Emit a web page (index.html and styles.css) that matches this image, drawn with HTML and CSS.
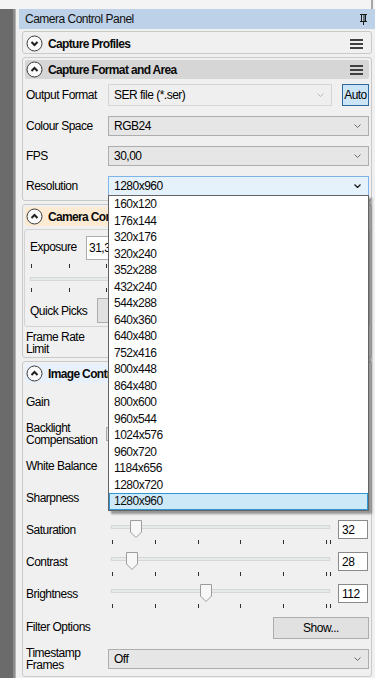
FILE: index.html
```html
<!DOCTYPE html>
<html>
<head>
<meta charset="utf-8">
<title>Camera Control Panel</title>
<link rel="stylesheet" href="styles.css">
</head>
<body>
<div class="topstrip"><div class="topstrip-fill"></div><div class="topstrip-line"></div></div>
<div class="main">
  <div class="dock-dark"></div>
  <div class="dock-edge"></div>
  <div class="dock-gap"></div>
  <div class="panel">
    <div class="titlebar">
      <span class="title">Camera Control Panel</span>
      <svg class="pin" width="7" height="11" viewBox="0 0 7 11"><path d="M0 0.5H7" stroke="#1a1a1a"/><path d="M1.5 0.5V7M5.5 0.5V7" stroke="#1a1a1a"/><path d="M4 1V7" stroke="#1a1a1a"/><path d="M0 7.5H7" stroke="#1a1a1a"/><path d="M3.5 7.5V11" stroke="#1a1a1a"/></svg>
    </div>
    <div class="sections">
      <section class="box">
        <div class="hdr">
          <svg class="ico" width="17" height="17" viewBox="0 0 17 17"><circle cx="8.5" cy="8.5" r="7.5" fill="#fafafa" stroke="#3a3a3a"/><path d="M5.5 7L8.5 10L11.5 7" fill="none" stroke="#1e1e1e" stroke-width="2"/></svg>
          <span class="htxt">Capture Profiles</span>
          <svg class="menu" width="13" height="10" viewBox="0 0 13 10"><rect x="0" y="0" width="13" height="2" fill="#404040"/><rect x="0" y="4" width="13" height="2" fill="#404040"/><rect x="0" y="8" width="13" height="2" fill="#404040"/></svg>
        </div>
      </section>

      <section class="box">
        <div class="hdr hdr-gray">
          <svg class="ico" width="17" height="17" viewBox="0 0 17 17"><circle cx="8.5" cy="8.5" r="7.5" fill="#fafafa" stroke="#3a3a3a"/><path d="M5.5 10L8.5 7L11.5 10" fill="none" stroke="#1e1e1e" stroke-width="2"/></svg>
          <span class="htxt">Capture Format and Area</span>
          <svg class="menu" width="13" height="10" viewBox="0 0 13 10"><rect x="0" y="0" width="13" height="2" fill="#404040"/><rect x="0" y="4" width="13" height="2" fill="#404040"/><rect x="0" y="8" width="13" height="2" fill="#404040"/></svg>
        </div>
        <div class="fmt-rows">
          <div class="frow frow-first">
            <span class="lbl">Output Format</span>
            <div class="combo combo-disabled combo-short"><span>SER file (*.ser)</span><svg class="chev" width="7" height="4" viewBox="0 0 7 4"><path d="M0.5 0.5L3.5 3.5L6.5 0.5" fill="none" stroke="#b8b8b8"/></svg></div>
            <div class="auto">Auto</div>
          </div>
          <div class="frow">
            <span class="lbl">Colour Space</span>
            <div class="combo"><span>RGB24</span><svg class="chev" width="7" height="4" viewBox="0 0 7 4"><path d="M0.5 0.5L3.5 3.5L6.5 0.5" fill="none" stroke="#6a6a6a"/></svg></div>
          </div>
          <div class="frow">
            <span class="lbl">FPS</span>
            <div class="combo"><span>30,00</span><svg class="chev" width="7" height="4" viewBox="0 0 7 4"><path d="M0.5 0.5L3.5 3.5L6.5 0.5" fill="none" stroke="#6a6a6a"/></svg></div>
          </div>
          <div class="frow">
            <span class="lbl">Resolution</span>
            <div class="combo-host">
              <div class="combo combo-active"><span>1280x960</span><svg class="chev" width="7" height="4" viewBox="0 0 7 4"><path d="M0.5 0.5L3.5 3.5L6.5 0.5" fill="none" stroke="#1a1a1a" stroke-width="1.3"/></svg></div>
              <ul class="droplist">
                <li>160x120</li>
                <li>176x144</li>
                <li>320x176</li>
                <li>320x240</li>
                <li>352x288</li>
                <li>432x240</li>
                <li>544x288</li>
                <li>640x360</li>
                <li>640x480</li>
                <li>752x416</li>
                <li>800x448</li>
                <li>864x480</li>
                <li>800x600</li>
                <li>960x544</li>
                <li>1024x576</li>
                <li>960x720</li>
                <li>1184x656</li>
                <li>1280x720</li>
                <li class="sel">1280x960</li>
              </ul>
            </div>
          </div>
        </div>
      </section>

      <section class="box">
        <div class="hdr hdr-peach">
          <svg class="ico" width="17" height="17" viewBox="0 0 17 17"><circle cx="8.5" cy="8.5" r="7.5" fill="#fafafa" stroke="#3a3a3a"/><path d="M5.5 10L8.5 7L11.5 10" fill="none" stroke="#1e1e1e" stroke-width="2"/></svg>
          <span class="htxt htxt-clip">Camera Control</span>
        </div>
        <div class="group">
          <div class="exp-row">
            <span class="exp-lbl">Exposure</span>
            <div class="textbox"><span class="tb-clip">31,3333</span></div>
          </div>
          <div class="gticks"><i></i><i></i><i></i><i></i><i></i><i></i><i></i></div>
          <div class="gtrack"></div>
          <div class="gticks gticks2"><i></i><i></i><i></i><i></i><i></i><i></i><i></i></div>
          <div class="qp-row">
            <span class="qp-lbl">Quick Picks</span>
            <div class="qp-btn"></div>
          </div>
        </div>
        <div class="fr-row"><span class="lbl lbl2">Frame Rate<br>Limit</span></div>
      </section>

      <section class="box box-img">
        <div class="hdr hdr-blue">
          <svg class="ico" width="17" height="17" viewBox="0 0 17 17"><circle cx="8.5" cy="8.5" r="7.5" fill="#fafafa" stroke="#3a3a3a"/><path d="M5.5 10L8.5 7L11.5 10" fill="none" stroke="#1e1e1e" stroke-width="2"/></svg>
          <span class="htxt htxt-clip">Image Controls</span>
        </div>
        <div class="img-rows">
          <div class="irow"><span class="lbl">Gain</span></div>
          <div class="irow"><span class="lbl lbl2">Backlight<br>Compensation</span><div class="mini"></div></div>
          <div class="irow"><span class="lbl">White Balance</span></div>
          <div class="irow"><span class="lbl">Sharpness</span></div>
          <div class="irow irow-slider">
            <span class="lbl">Saturation</span>
            <div class="slider">
              <div class="track"></div>
              <svg class="thumb" style="left:22px" width="12" height="18" viewBox="0 0 12 18"><path d="M0.5 0.5H11.5V12L6 17.5L0.5 12Z" fill="#f7f7f7" stroke="#9c9c9c"/></svg>
              <div class="ticks"><i></i><i></i><i></i><i></i><i></i><i></i><i class="last"></i></div>
            </div>
            <div class="valbox">32</div>
          </div>
          <div class="irow irow-slider">
            <span class="lbl">Contrast</span>
            <div class="slider">
              <div class="track"></div>
              <svg class="thumb" style="left:18px" width="12" height="18" viewBox="0 0 12 18"><path d="M0.5 0.5H11.5V12L6 17.5L0.5 12Z" fill="#f7f7f7" stroke="#9c9c9c"/></svg>
              <div class="ticks"><i></i><i></i><i></i><i></i><i></i><i></i><i class="last"></i></div>
            </div>
            <div class="valbox">28</div>
          </div>
          <div class="irow irow-slider">
            <span class="lbl">Brightness</span>
            <div class="slider">
              <div class="track"></div>
              <svg class="thumb" style="left:92px" width="12" height="18" viewBox="0 0 12 18"><path d="M0.5 0.5H11.5V12L6 17.5L0.5 12Z" fill="#f7f7f7" stroke="#9c9c9c"/></svg>
              <div class="ticks"><i></i><i></i><i></i><i></i><i></i><i></i><i class="last"></i></div>
            </div>
            <div class="valbox">112</div>
          </div>
          <div class="irow irow-btn">
            <span class="lbl">Filter Options</span>
            <div class="show-btn">Show...</div>
          </div>
          <div class="irow">
            <span class="lbl lbl2">Timestamp<br>Frames</span>
            <div class="combo"><span>Off</span><svg class="chev" width="7" height="4" viewBox="0 0 7 4"><path d="M0.5 0.5L3.5 3.5L6.5 0.5" fill="none" stroke="#6a6a6a"/></svg></div>
          </div>
        </div>
      </section>
      <section class="box box-next"></section>
    </div>
  </div>
</div>
</body>
</html>
```

FILE: styles.css
```css
* { box-sizing: border-box; margin: 0; padding: 0; }
html, body { width: 375px; height: 678px; overflow: hidden; }
body {
  background: #f0f0f0;
  font-family: "Liberation Sans", Arial, sans-serif;
  font-size: 12px;
  letter-spacing: -0.5px;
  color: #000;
}
ul { list-style: none; }

.topstrip { height: 9px; background: #f4f4f4; display: flex; }
.topstrip-fill { width: 371px; }
.topstrip-line { width: 2px; background: #a8a8a8; }

.main { display: flex; height: 669px; overflow: hidden; }
.dock-dark { width: 13px; background: #6b6b6b; flex: none; }
.dock-edge { width: 3px; background: #8c8c8c; border-right: 1px solid #b4b4b4; flex: none; }
.dock-gap { width: 3px; flex: none; }
.panel { flex: 1; display: flex; flex-direction: column; min-width: 0; }

.titlebar {
  flex: none;
  height: 20px;
  background: #bdd1e9;
  display: flex;
  align-items: center;
  justify-content: space-between;
  padding: 0 8px 0 6px;
}
.title { font-size: 12px; color: #111; }
.pin { display: block; }

.sections { flex: none; padding: 2px 3px 0 3px; display: flex; flex-direction: column; gap: 3px; }

.box {
  flex: none;
  border: 1px solid #c9c9c9;
  border-radius: 3px;
  padding: 2px 2px 0 2px;
  background: #f0f0f0;
}
.box-img { padding-bottom: 1px; }
.box-next { height: 20px; }

.hdr {
  height: 19px;
  display: flex;
  align-items: center;
  padding: 0 6px 0 1px;
  border-radius: 2px;
}
.hdr-gray { background: #d6d6d6; }
.hdr-peach { background: #fcead3; }
.hdr-blue { background: #e8f1fb; }
.ico { flex: none; display: block; }
.htxt { flex: 1; margin-left: 5px; font-weight: bold; letter-spacing: -0.65px; color: #0a0a0a; white-space: nowrap; }
.htxt-clip { flex: none; width: 60px; overflow: hidden; }
.menu { flex: none; display: block; }

.lbl { flex: 0 0 83px; padding-left: 1px; white-space: nowrap; }
.lbl2 { line-height: 12px; }

/* Capture format rows */
.fmt-rows { padding: 5px 0 4px 0; display: flex; flex-direction: column; gap: 10px; }
.frow { display: flex; align-items: center; height: 20px; }
.frow-first { height: 22px; }

.combo {
  flex: 1;
  height: 20px;
  display: flex;
  align-items: center;
  justify-content: space-between;
  padding: 0 7px 0 5px;
  border: 1px solid #adadad;
  background: #e6e6e6;
  white-space: nowrap;
}
.combo span { padding-bottom: 1px; }
.combo-short { flex: 0 0 224px; height: 22px; }
.combo-disabled { background: #efefef; border-color: #d6d6d6; }
.combo-active { background: #e5f1fb; border-color: #7eb4ea; }
.chev { display: block; flex: none; }

.auto {
  flex: 0 0 27px;
  height: 22px;
  margin-left: 10px;
  background: #cce4f7;
  border: 1px solid #2c6a9e;
  display: flex;
  align-items: center;
  justify-content: center;
  letter-spacing: -0.6px;
}

.combo-host { flex: 1; position: relative; height: 20px; display: flex; }
.droplist {
  position: absolute;
  left: 0;
  right: 0;
  top: calc(100% - 1px);
  z-index: 10;
  background: #fff;
  border: 1px solid #646464;
  box-shadow: 3px 3px 2px rgba(0, 0, 0, 0.38);
}
.droplist li {
  height: 16.5px;
  line-height: 17px;
  padding-left: 5px;
  color: #0c0c0c;
}
.droplist li.sel {
  background: #cde8f7;
  border: 1px solid #2f97d4;
  padding-left: 4px;
  line-height: 14px;
}

/* Camera control group */
.group {
  margin: 3px -1px 0 -1px;
  border: 1px solid #d3d3d3;
  border-radius: 3px;
  padding: 0 0 3px 5px;
}
.exp-row { margin-top: 6px; height: 24px; display: flex; align-items: center; }
.exp-lbl { flex: 0 0 56px; padding-bottom: 3px; }
.textbox {
  width: 80px;
  height: 24px;
  border: 1px solid #abadb3;
  background: #fff;
  padding-left: 2px;
  display: flex;
  align-items: center;
}
.tb-clip { display: block; width: 19px; overflow: hidden; white-space: nowrap; }
.gticks { margin-top: 4px; height: 4px; display: flex; padding-left: 1px; }
.gticks i { display: block; width: 1px; height: 4px; background: #2e2e2e; margin-right: 36.6px; flex: none; }
.gticks2 { margin-top: 7px; }
.gtrack { margin-top: 9px; height: 4px; width: 300px; background: #e7eaea; border: 1px solid #d6d6d6; }
.qp-row { margin-top: 6px; height: 25px; display: flex; align-items: center; }
.qp-lbl { flex: 0 0 67px; }
.qp-btn { width: 100px; height: 25px; background: #e1e1e1; border: 1px solid #adadad; }

.fr-row { margin: 4px 0 2px 0; display: flex; }

/* Image controls */
.img-rows { padding-top: 3px; display: flex; flex-direction: column; }
.irow { height: 32px; display: flex; align-items: center; flex: none; }
.irow-slider { align-items: flex-start; }
.irow-slider .lbl { align-self: center; }
.mini { width: 30px; height: 14px; margin-left: -2px; background: #e1e1e1; border: 1px solid #a9a9a9; }

.slider { width: 224px; position: relative; height: 32px; padding: 11px 2px 0 3px; }
.track { height: 4px; background: #e7eaea; border: 1px solid #d6d6d6; }
.thumb { position: absolute; top: 6px; display: block; }
.ticks { margin-top: 11px; height: 4px; display: flex; width: 219px; padding-left: 1px; }
.ticks i { display: block; width: 1px; height: 4px; background: #2e2e2e; margin-right: 41.8px; flex: none; }
.ticks i.last { margin-left: -38.8px; }
.valbox {
  margin-top: 6px;
  margin-left: 6px;
  width: 30px;
  height: 19px;
  background: #fff;
  border: 1px solid #8a8a8a;
  padding-left: 3px;
  display: flex;
  align-items: center;
}

.irow-btn { justify-content: space-between; height: 33px; padding-top: 1px; }
.show-btn {
  width: 96px;
  height: 22px;
  margin-top: 2px;
  background: #e1e1e1;
  border: 1px solid #adadad;
  display: flex;
  align-items: center;
  justify-content: center;
}
```
